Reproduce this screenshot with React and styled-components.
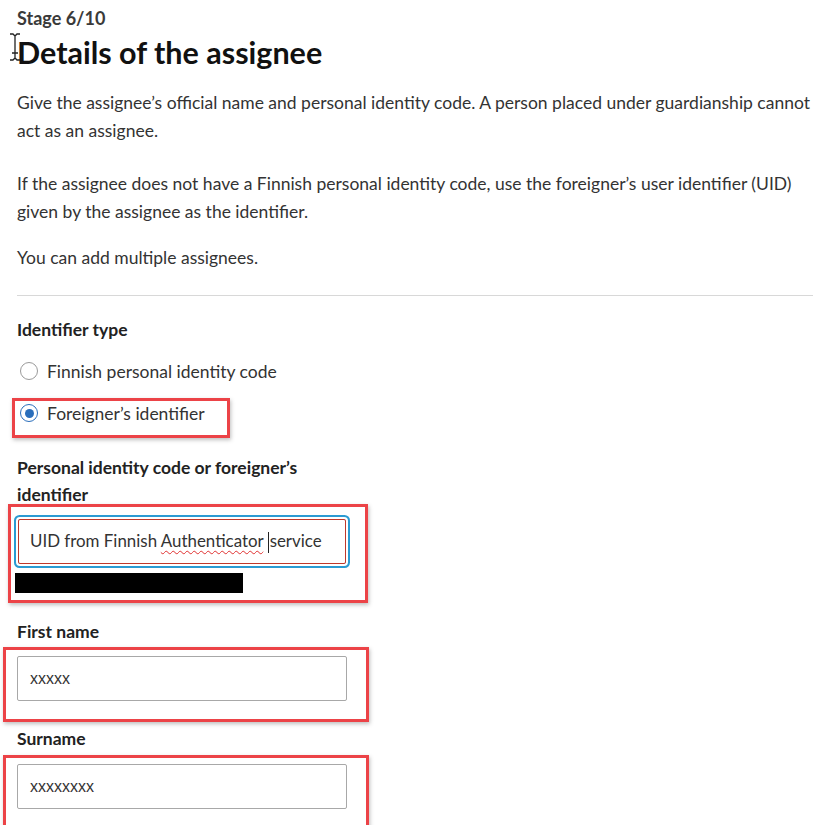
import React from "react"
import styled, { createGlobalStyle } from "styled-components"

const Global = createGlobalStyle`
  body {
    margin: 0;
    background: #fff;
    font-family: Lato, "Open Sans", sans-serif;
    color: #2c2c2c;
  }
`

const Page = styled.main`
  position: relative;
  width: 796px;
  padding: 6px 0 0 17px;
  height: 819px;
  overflow: hidden;
`

const Stage = styled.div`
  font-size: 18px;
  line-height: 24px;
  font-weight: 700;
  color: #3a3a3a;
`

const Heading = styled.h1`
  margin: 4px 0 19px;
  font-size: 30.5px;
  line-height: 36px;
  font-weight: 700;
  color: #111;
`

const Para = styled.p`
  margin: 0 0 ${p => p.$gap}px;
  font-size: 17.5px;
  line-height: 28px;
  color: #333;
`

const Divider = styled.hr`
  margin: 23px 0 22px;
  border: 0;
  border-top: 1px solid #d8d8d8;
`

const Legend = styled.div`
  font-size: 17.5px;
  line-height: ${p => p.$lh || 24}px;
  font-weight: 700;
  color: #222;
  width: 330px;
`

const RadioList = styled.div`
  display: flex;
  flex-direction: column;
  margin-top: 8px;
`

const RadioRow = styled.label`
  position: relative;
  display: flex;
  align-items: center;
  gap: 9px;
  height: 42px;
  font-size: 17.5px;
  color: #333;
  padding-left: 3px;
`

const Dot = styled.span`
  width: 18px;
  height: 18px;
  box-sizing: border-box;
  border-radius: 50%;
  border: 1.5px solid ${p => (p.$on ? "#2a6ebb" : "#9a9a9a")};
  display: flex;
  align-items: center;
  justify-content: center;
  &::after {
    content: "";
    width: 9px;
    height: 9px;
    border-radius: 50%;
    background: ${p => (p.$on ? "#2a6ebb" : "transparent")};
  }
`

const Field = styled.div`
  position: relative;
  display: flow-root;
  margin-top: ${p => p.$top || 0}px;
  width: 330px;
`

const InputBox = styled.div`
  box-sizing: border-box;
  height: 45px;
  display: flex;
  align-items: center;
  white-space: pre;
  padding: 0 ${p => (p.$focus ? 11 : 12)}px;
  border: 1px solid ${p => (p.$focus ? "#c0392b" : "#a8a8a8")};
  border-radius: 2px;
  box-shadow: ${p => (p.$focus ? "0 0 0 2px #fff, 0 0 0 4px #2b9bd3" : "none")};
  font-size: ${p => (p.$small ? 16 : 16.9)}px;
  font-family: ${p => (p.$small ? '"Liberation Sans", Arial, sans-serif' : "Lato, sans-serif")};
  color: #333;
  margin: ${p => p.$gap}px 0 0 ${p => (p.$focus ? 1 : 0)}px;
  width: ${p => (p.$focus ? 328 : 330)}px;
`

const Misspelled = styled.span`
  text-decoration: underline wavy #e03030;
  text-decoration-thickness: 1px;
  text-underline-offset: 3px;
`

const Caret = styled.span`
  display: inline-block;
  width: 1px;
  height: 21px;
  background: #222;
  vertical-align: middle;
  margin-right: 1px;
`

const Redacted = styled.div`
  width: 228px;
  height: 20px;
  background: #000;
  margin: 9px 0 0 -2px;
`

const Mark = styled.span`
  position: absolute;
  top: ${p => p.$t}px;
  left: ${p => p.$l}px;
  right: ${p => p.$r}px;
  bottom: ${p => p.$b}px;
  border: 3px solid #ec4347;
  box-shadow: 1px 2px 4px rgba(0, 0, 0, 0.25);
  pointer-events: none;
`

const Cursor = styled.svg`
  position: absolute;
  left: 8px;
  top: 33px;
`

export default function App() {
  return (
    <>
      <Global />
      <Page>
        <Cursor width="14" height="28" viewBox="0 0 14 28">
          <path d="M2 1h3l2 2 2-2h3M7 3v22M2 27h3l2-2 2 2h3M4 20h6" stroke="#222" strokeWidth="1.3" fill="none" />
        </Cursor>
        <Stage>Stage 6/10</Stage>
        <Heading>Details of the assignee</Heading>
        <Para $gap={25}>
          Give the assignee’s official name and personal identity code. A person placed under guardianship cannot
          act as an assignee.
        </Para>
        <Para $gap={18}>
          If the assignee does not have a Finnish personal identity code, use the foreigner’s user identifier (UID)
          given by the assignee as the identifier.
        </Para>
        <Para $gap={0}>You can add multiple assignees.</Para>
        <Divider />
        <Legend>Identifier type</Legend>
        <RadioList>
          <RadioRow>
            <Dot />
            Finnish personal identity code
          </RadioRow>
          <RadioRow>
            <Dot $on />
            Foreigner’s identifier
            <Mark $t={6} $l={-5} $r={583} $b={-4} />
          </RadioRow>
        </RadioList>
        <Field $top={20}>
          <Legend $lh={27}>Personal identity code or foreigner’s identifier</Legend>
        </Field>
        <Field>
          <InputBox $focus $gap={11}>
            <span>
              UID from Finnish <Misspelled>Authenticator</Misspelled> <Caret />service
            </span>
          </InputBox>
          <Redacted />
          <Mark $t={-4} $l={-9} $r={-21} $b={-10} />
        </Field>
        <Field $top={27}>
          <Legend>First name</Legend>
          <InputBox $small $gap={12}>xxxxx</InputBox>
          <Mark $t={27} $l={-14} $r={-22} $b={-21} />
        </Field>
        <Field $top={26}>
          <Legend>Surname</Legend>
          <InputBox $small $gap={13}>xxxxxxxx</InputBox>
          <Mark $t={28} $l={-14} $r={-22} $b={-22} />
        </Field>
      </Page>
    </>
  )
}
